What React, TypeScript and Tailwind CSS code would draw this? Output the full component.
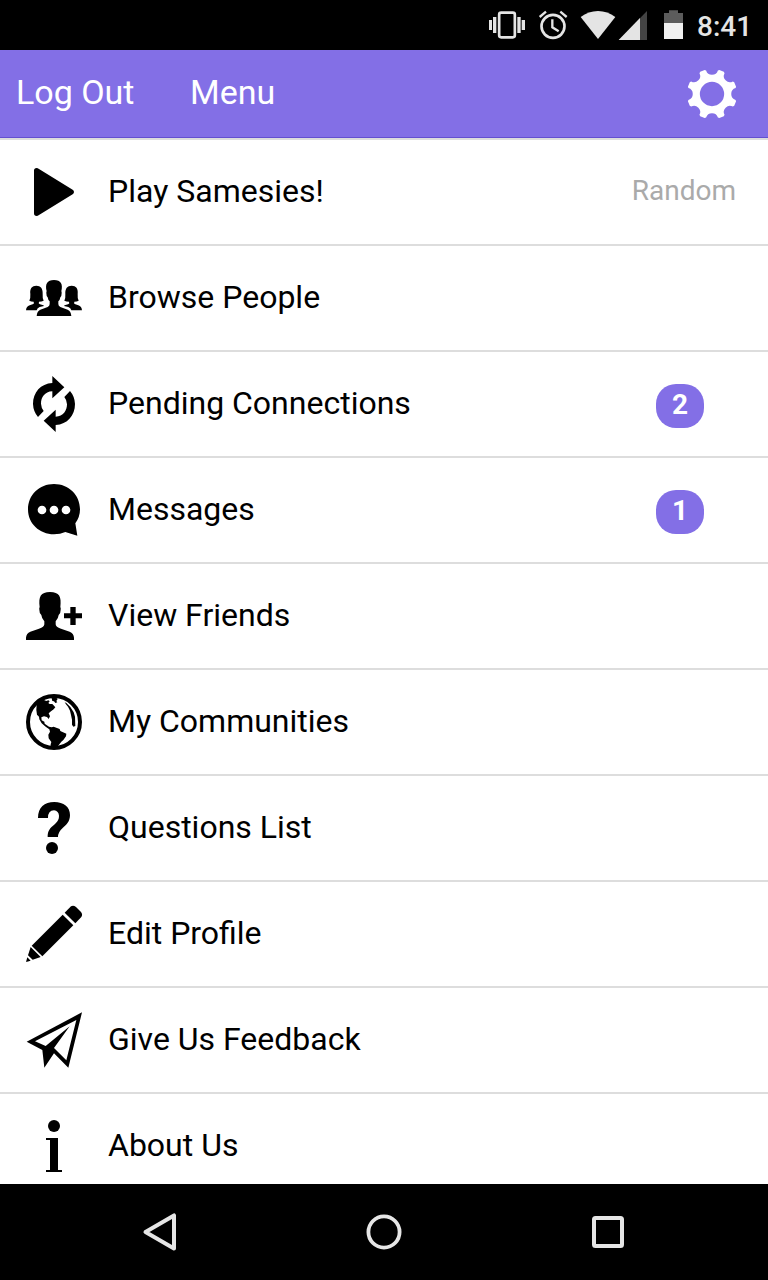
import type { ReactNode } from "react";

type Row = { label: string; icon: ReactNode; note?: string; badge?: number };

function gearOutline() {
  const c = 84;
  const point = (deg: number, r: number) => {
    const a = (deg * Math.PI) / 180;
    return `${(c + r * Math.sin(a)).toFixed(1)} ${(c - r * Math.cos(a)).toFixed(1)}`;
  };
  let d = `M${point(14, 73)}`;
  for (let i = 0; i < 8; i++) {
    const s = i * 45;
    d += `L${point(s + 17, 75.5)}L${point(s + 28, 75.5)}L${point(s + 31, 73)}`;
    d += `A18.5 18.5 0 0 0 ${point(s + 59, 73)}`;
  }
  return `${d}Z M84 47.500a36.500 36.500 0 1 0 0 73a36.500 36.500 0 1 0 0-73Z`;
}

const rows: Row[] = [
  {
    label: "Play Samesies!",
    note: "Random",
    icon: <path d="M60 56Q60 48 68 48Q71 48 75 51L176 113Q180 116 180 120T176 127L75 189Q71 192 68 192Q60 192 60 184Z" />,
  },
  {
    label: "Browse People",
    icon: (
      <g transform="translate(0 6)">
        <path d="M68 168C69 158 72 152 79 149L101 141Q107 138 107 132V124Q102 120 101 112Q97 109 97 99Q97 95 98 94C93 72 99 60 120 60S147 72 142 94Q143 95 143 99Q143 109 139 112Q138 120 133 124V132Q133 138 139 141L161 149C168 152 171 158 172 168Z" />
        <path d="M36 151C37 142 40 138 47 136L56 133Q62 131 59 125Q51 125 46 122Q50 114 49 102C47 85 54 77 67 77S87 85 86 102Q85 114 89 122Q83 125 75 125Q72 131 78 133L88 136L90 138L77 141Q70 144 68 151Z" />
        <path d="M204 151C203 142 200 138 193 136L184 133Q178 131 181 125Q189 125 194 122Q190 114 191 102C193 85 186 77 173 77S153 85 154 102Q155 114 151 122Q157 125 165 125Q168 131 162 133L152 136L150 138L163 141Q170 144 172 151Z" />
      </g>
    ),
  },
  {
    label: "Pending Connections",
    badge: 2,
    icon: (
      <>
        <path d="M115 36L151 70L115 103V82C92 83 81 100 81 119Q82 133 89 141L72 159Q58 143 57 120C57 85 80 59 115 57Z" />
        <path d="M125 204L89 170L125 137V158C148 157 159 140 159 121Q158 107 151 99L168 81Q182 97 183 120C183 155 160 181 125 183Z" />
      </>
    ),
  },
  {
    label: "Messages",
    badge: 1,
    icon: (
      <path
        fillRule="evenodd"
        d="M120 42C164 42 198 75 198 118Q198 141 184 160L190 197L154 186Q139 193 120 193C76 193 42 161 42 118S76 42 120 42ZM84 107a13 13 0 1 0 0 26a13 13 0 1 0 0-26ZM120 107a13 13 0 1 0 0 26a13 13 0 1 0 0-26ZM156 107a13 13 0 1 0 0 26a13 13 0 1 0 0-26Z"
      />
    ),
  },
  {
    label: "View Friends",
    icon: (
      <>
        <path d="M36 192V185Q37 172 49 167L75 158Q91 153 91 145V136Q83 127 82 117Q76 113 76 101Q75 96 77 93C73 62 80 48 108 48S143 62 139 93Q141 96 140 101Q140 113 134 117Q133 127 125 136V145Q125 153 141 158L167 167Q179 172 180 185V192Z" />
        <path d="M169 93H185V112H204V127H185V147H169V127H150V112H169Z" />
      </>
    ),
  },
  {
    label: "My Communities",
    icon: (
      <>
        <circle cx="120" cy="120" r="78" fill="none" stroke="currentColor" strokeWidth="12" />
        <path d="M68 67Q82 50 96 48L90 54L97 57L103 55L107 58L103 63L107 66L115 66L124 76L119 82L111 88L104 94L108 103L104 111L99 105L90 103L82 106L83 115L91 119L92 125L105 134L113 136L119 134L137 141L139 147L157 155L156 163L148 174L142 179L132 192L121 201L110 196V187L112 180L104 169L103 158L108 149L106 142L95 134L83 124L76 112L75 104L69 98L67 84Z" />
        <path d="M112 45L125 46L131 51L127 57L130 61L124 63L120 58L115 57Z" />
        <path d="M152 61L157 63L169 75L179 91L183 104L184 132L178 134L174 128V113L171 99L168 86L162 74L157 68Z" />
      </>
    ),
  },
  {
    label: "Questions List",
    icon: (
      <>
        <path d="M72 90C72 58 91 42 121 42C149 42 168 57 168 81C168 101 157 110 146 120Q132 132 132 147H101C101 132 104 124 117 113C130 102 135 96 135 83Q134 69 120 67Q102 67 102 90Z" />
        <circle cx="114" cy="180" r="18" />
      </>
    ),
  },
  {
    label: "Edit Profile",
    icon: (
      <>
        <path d="M152 56L171 37Q178 33 186 39L201 54Q207 62 202 69L184 88Z" />
        <path d="M146 62L178 94L85 187L53 155Z" />
        <path d="M50 159L80 189L56 197L42 184ZM40 190L50 200L36 204Z" />
      </>
    ),
  },
  {
    label: "Give Us Feedback",
    icon: (
      <path
        fillRule="evenodd"
        d="M204 37L163 203L120 160L91 203L85 150L38 125ZM187 60L63 124L95 138L167 79L120 144L157 181Z"
      />
    ),
  },
  {
    label: "About Us",
    icon: (
      <>
        <circle cx="120" cy="60" r="18" />
        <path d="M96 96H132V192H144V198H96V192H108V102H96Z" />
      </>
    ),
  },
];

function StatusBar() {
  return (
    <div className="flex h-[50px] shrink-0 items-center justify-end bg-black text-[#e4e4e4]">
      <svg className="h-[50px] w-[217px]" viewBox="0 0 651 150" fill="currentColor">
        <rect x="57.500" y="38" width="47" height="74" rx="6" fill="none" stroke="currentColor" strokeWidth="8" />
        <path d="M27 60h9v30h-9ZM39 51h10v48H39ZM112 51h10v48h-10ZM125 60h10v30h-10Z" />
        <circle cx="219" cy="79" r="34.500" fill="none" stroke="currentColor" strokeWidth="8" />
        <path d="M217 58V82L236 94M179 51L198 35M260 51L241 35" fill="none" stroke="currentColor" strokeWidth="7" />
        <path d="M302 51C332 27 376 27 406 51L354 117Z" />
        <path d="M501 33V120H416Z" fill="#444" />
        <path d="M480 54V120H416Z" />
        <path d="M552 69V39H567V31H594V39H609V69Z" fill="#5c5c5c" />
        <path d="M552 69H609V117H552Z" fill="#f0f0f0" />
      </svg>
      <span className="w-[71px] pt-1 text-[28px] leading-[32px] font-medium">8:41</span>
    </div>
  );
}

function Header() {
  return (
    <header className="flex h-[88px] shrink-0 items-center border-b border-[#6450d0] bg-[#836fe6] pr-7 pl-4 text-[34px] leading-[40px] text-white">
      <span className="w-[174px] pb-[3px]">Log Out</span>
      <span className="flex-1 pb-[3px]">Menu</span>
      <svg className="size-14" viewBox="0 0 168 168" fill="currentColor">
        <path fillRule="evenodd" d={gearOutline()} />
      </svg>
    </header>
  );
}

function MenuRow({ row }: { row: Row }) {
  return (
    <li className="flex h-[106px] shrink-0 items-center border-t-2 border-[#dddddd] pl-[14px]">
      <svg className="mr-[14px] size-20" viewBox="0 0 240 240" fill="currentColor">
        {row.icon}
      </svg>
      <span className="flex-1 pb-[2px] text-[32px] leading-[40px]">{row.label}</span>
      {row.note && <span className="mr-8 pb-[3px] text-[28px] leading-[40px] text-[#aaaaaa]">{row.note}</span>}
      {row.badge && (
        <span className="mt-1 mr-16 flex h-11 w-12 justify-center rounded-[20px] bg-[#836fe6] text-[28px] leading-[42px] font-bold text-white">
          {row.badge}
        </span>
      )}
    </li>
  );
}

function NavigationBar() {
  return (
    <nav className="flex h-24 shrink-0 items-center justify-center gap-40 bg-black text-[#e6e6e6]">
      <svg className="size-16" viewBox="0 0 64 64" fill="none" stroke="currentColor" strokeWidth="4" strokeLinejoin="round">
        <path d="M17.500 32L46 15.400V48.600Z" />
      </svg>
      <svg className="size-16" viewBox="0 0 64 64" fill="none" stroke="currentColor" strokeWidth="3.800">
        <circle cx="32" cy="32" r="15.600" />
      </svg>
      <svg className="size-16" viewBox="0 0 64 64" fill="none" stroke="currentColor" strokeWidth="4">
        <rect x="18" y="18" width="28" height="28" rx="1.500" />
      </svg>
    </nav>
  );
}

export default function App() {
  return (
    <div className="flex h-[1280px] w-[768px] flex-col overflow-hidden bg-white font-['Roboto',sans-serif] text-black">
      <StatusBar />
      <Header />
      <ul className="flex min-h-0 flex-1 flex-col overflow-hidden">
        {rows.map((row) => (
          <MenuRow key={row.label} row={row} />
        ))}
      </ul>
      <NavigationBar />
    </div>
  );
}
